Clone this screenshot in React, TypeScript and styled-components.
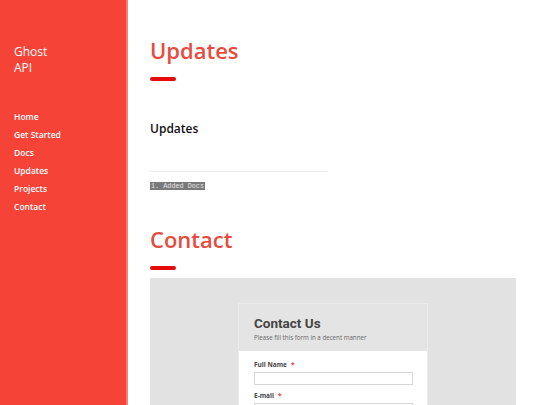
import styled, { createGlobalStyle } from "styled-components";

const GlobalStyle = createGlobalStyle`
  html, body {
    margin: 0;
    padding: 0;
    background: #ffffff;
    font-family: "Open Sans", "Noto Sans", sans-serif;
  }
  * {
    box-sizing: border-box;
  }
`;

const Page = styled.div`
  display: flex;
  width: 100%;
  min-height: 100vh;
`;

const Sidebar = styled.aside`
  flex: 0 0 128px;
  background-color: #f54437;
  border-right: 2px solid #f87e76;
  padding: 44px 0 0 14px;
  color: #ffffff;
`;

const Brand = styled.div`
  font-size: 12px;
  line-height: 16px;
  font-weight: 500;
  margin-bottom: 32px;
`;

const Nav = styled.nav`
  display: flex;
  flex-direction: column;
`;

const NavLink = styled.a`
  font-size: 8.5px;
  line-height: 18px;
  font-weight: 600;
  color: #ffffff;
  text-decoration: none;
`;

const Main = styled.main`
  flex: 1;
  padding: 35px 24px 0 22px;
`;

const Title = styled.h1<{ $top: number }>`
  margin: ${(p) => p.$top}px 0 0;
  font-size: 22px;
  line-height: 30px;
  font-weight: 600;
  color: #e84b3d;
`;

const Bar = styled.div`
  width: 26px;
  height: 4px;
  margin-top: 12px;
  border-radius: 2px;
  background-color: #e60b0b;
`;

const SubTitle = styled.h3`
  margin: 40px 0 0;
  font-size: 12px;
  line-height: 16px;
  font-weight: 600;
  color: #111111;
`;

const Rule = styled.hr`
  width: 177px;
  margin: 34px 0 0;
  border: none;
  border-top: 1px solid #eeeeee;
`;

const Code = styled.code`
  display: block;
  width: fit-content;
  margin-top: 10px;
  padding: 0 1px;
  font-family: "Liberation Mono", monospace;
  font-size: 6.8px;
  line-height: 8px;
  background-color: #7a7a7a;
  color: #e6e6e6;
`;

const FormArea = styled.section`
  width: 366px;
  margin-top: 8px;
  padding-top: 25px;
  min-height: 140px;
  background-color: #e3e2e2;
  display: flex;
  justify-content: center;
`;

const Card = styled.div`
  width: 190px;
  align-self: flex-start;
  border: 1px solid #ebebeb;
  background-color: #ffffff;
`;

const CardHead = styled.div`
  height: 47px;
  padding: 10px 15px 0;
  background-color: #e4e4e4;
`;

const CardTitle = styled.h2`
  margin: 0;
  font-family: Roboto, "Noto Sans", sans-serif;
  font-size: 13.5px;
  line-height: 18px;
  font-weight: 700;
  color: #444444;
`;

const CardNote = styled.p`
  margin: 1px 0 0;
  font-size: 6.2px;
  line-height: 9px;
  color: #666666;
`;

const CardBody = styled.div`
  padding: 9px 15px 0;
`;

const Label = styled.label`
  display: block;
  font-size: 6.5px;
  line-height: 10px;
  font-weight: 700;
  color: #444444;
  span {
    color: #e53935;
    margin-left: 4px;
  }
`;

const Input = styled.input`
  display: block;
  width: 159px;
  height: 13px;
  margin: 2px 0 6px;
  border: 1px solid #d6d6d6;
  background: #ffffff;
  outline: none;
`;

const links = ["Home", "Get Started", "Docs", "Updates", "Projects", "Contact"];

export default function App() {
  return (
    <>
      <GlobalStyle />
      <Page>
        <Sidebar>
          <Brand>
            Ghost
            <br />
            API
          </Brand>
          <Nav>
            {links.map((l) => (
              <NavLink key={l} href="#">
                {l}
              </NavLink>
            ))}
          </Nav>
        </Sidebar>
        <Main>
          <Title $top={0}>Updates</Title>
          <Bar />
          <SubTitle>Updates</SubTitle>
          <Rule />
          <Code>1. Added Docs</Code>
          <Title $top={34}>Contact</Title>
          <Bar />
          <FormArea>
            <Card>
              <CardHead>
                <CardTitle>Contact Us</CardTitle>
                <CardNote>Please fill this form in a decent manner</CardNote>
              </CardHead>
              <CardBody>
                <Label>
                  Full Name<span>*</span>
                </Label>
                <Input type="text" />
                <Label>
                  E-mail<span>*</span>
                </Label>
                <Input type="email" />
              </CardBody>
            </Card>
          </FormArea>
        </Main>
      </Page>
    </>
  );
}
